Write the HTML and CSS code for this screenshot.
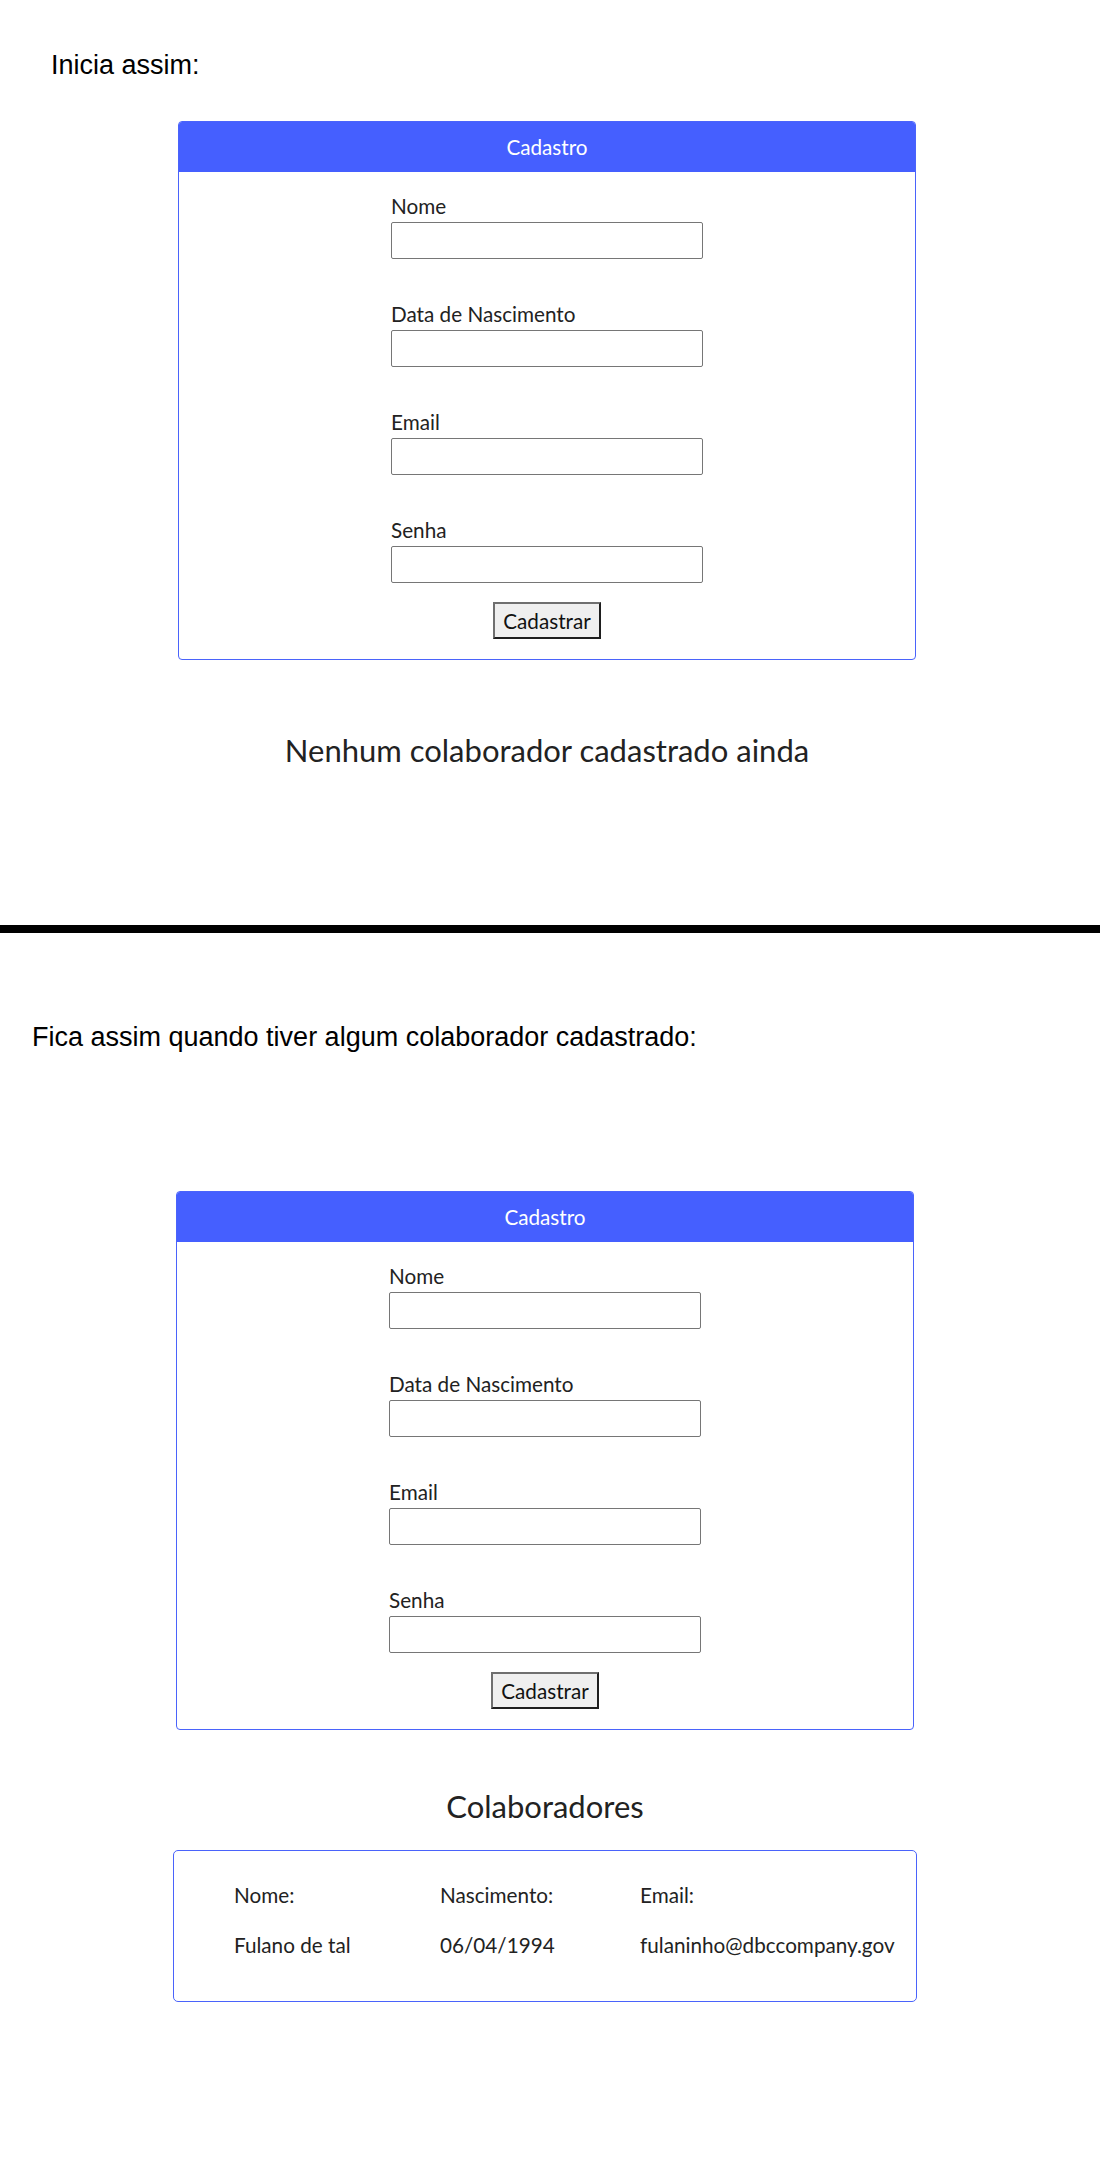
FILE: index.html
```html
<!DOCTYPE html>
<html lang="pt-BR">
<head>
<meta charset="utf-8">
<title>Cadastro de colaboradores</title>
<link rel="stylesheet" href="styles.css">
</head>
<body>
<p class="note note-first">Inicia assim:</p>

<div class="card card-a">
  <div class="card-head">Cadastro</div>
  <form class="card-body">
    <div class="fields">
      <div class="field"><label>Nome</label><input type="text"></div>
      <div class="field"><label>Data de Nascimento</label><input type="text"></div>
      <div class="field"><label>Email</label><input type="text"></div>
      <div class="field"><label>Senha</label><input type="password"></div>
    </div>
    <button type="button" class="btn">Cadastrar</button>
  </form>
</div>

<h2 class="heading heading-empty">Nenhum colaborador cadastrado ainda</h2>

<hr class="divider">

<p class="note note-second">Fica assim quando tiver algum colaborador cadastrado:</p>

<div class="card card-b">
  <div class="card-head">Cadastro</div>
  <form class="card-body">
    <div class="fields">
      <div class="field"><label>Nome</label><input type="text"></div>
      <div class="field"><label>Data de Nascimento</label><input type="text"></div>
      <div class="field"><label>Email</label><input type="text"></div>
      <div class="field"><label>Senha</label><input type="password"></div>
    </div>
    <button type="button" class="btn">Cadastrar</button>
  </form>
</div>

<h2 class="heading heading-list">Colaboradores</h2>

<div class="list">
  <span>Nome:</span><span>Nascimento:</span><span>Email:</span>
  <span>Fulano de tal</span><span>06/04/1994</span><span>fulaninho@dbccompany.gov</span>
</div>
</body>
</html>
```

FILE: styles.css
```css
body {
  margin: 0;
  background: #ffffff;
  font-family: Lato, "Noto Sans", sans-serif;
  color: #222222;
}

.note {
  font-family: "Liberation Sans", Arial, sans-serif;
  font-size: 27px;
  line-height: 30px;
  color: #000000;
  margin: 0;
}

.note-first {
  padding: 50px 0 0 51px;
}

.note-second {
  margin: 89px 0 0 32px;
}

.card {
  box-sizing: border-box;
  width: 738px;
  border: 1px solid #4a63fb;
  border-radius: 4px;
  overflow: hidden;
}

.card-a {
  margin: 41px 0 0 178px;
}

.card-b {
  margin: 139px 0 0 176px;
}

.card-head {
  height: 50px;
  line-height: 50px;
  background: #455fff;
  color: #ffffff;
  text-align: center;
  font-size: 20.7px;
}

.card-body {
  margin: 0;
  padding: 22px 0 20px;
  display: flex;
  flex-direction: column;
  align-items: center;
}

.fields {
  width: 312px;
  display: flex;
  flex-direction: column;
  gap: 43px;
}

.field {
  display: flex;
  flex-direction: column;
}

.field label {
  font-size: 20.7px;
  line-height: 24px;
  margin-bottom: 4px;
  color: #222222;
}

.field input {
  box-sizing: border-box;
  width: 312px;
  height: 37px;
  margin: 0;
  padding: 0 4px;
  border: 1px solid #767676;
  border-radius: 2px;
  background: #ffffff;
  font: inherit;
}

.btn {
  box-sizing: border-box;
  margin-top: 19px;
  width: 108px;
  height: 37px;
  padding: 0;
  border-style: solid;
  border-width: 2px;
  border-color: #6f6f6f #1e1e1e #1e1e1e #6f6f6f;
  background: #efefef;
  color: #111111;
  font-family: Lato, "Noto Sans", sans-serif;
  font-size: 20.7px;
  line-height: 24px;
}

.heading {
  width: 738px;
  font-size: 31px;
  line-height: 36px;
  font-weight: 400;
  text-align: center;
  color: #222222;
}

.heading-empty {
  margin: 72px 0 0 178px;
}

.heading-list {
  margin: 58px 0 0 176px;
}

.divider {
  height: 8px;
  margin: 157px 0 0;
  border: 0;
  background: #000000;
}

.list {
  box-sizing: border-box;
  width: 744px;
  margin: 26px 0 0 173px;
  padding: 32px 0 44px 60px;
  border: 1px solid #4a63fb;
  border-radius: 5px;
  display: grid;
  grid-template-columns: 206px 200px auto;
  row-gap: 26px;
  font-size: 20.7px;
  line-height: 24px;
  color: #222222;
}
```
